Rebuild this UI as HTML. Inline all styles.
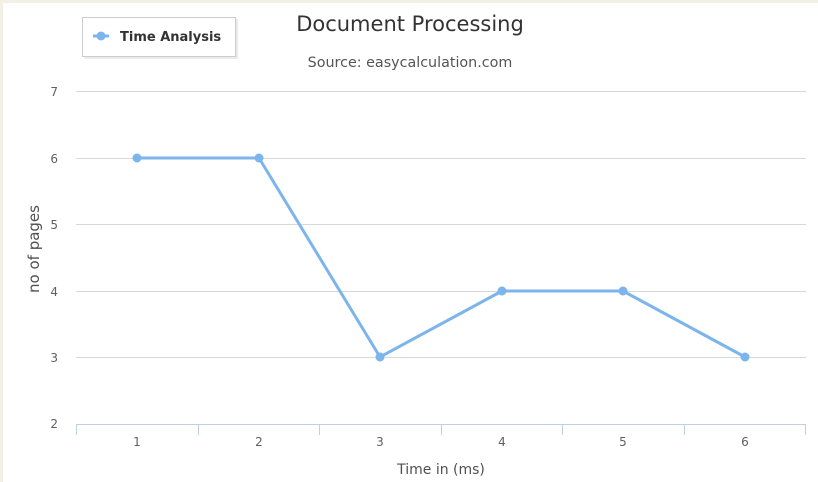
<!DOCTYPE html>
<html><head><style>
body{margin:0;width:818px;height:482px;overflow:hidden;background:#f2efe4;font-family:"DejaVu Sans","Liberation Sans",sans-serif}
#c{position:absolute;left:3px;top:3px;width:815px;height:479px;background:#fff}
</style></head><body>
<div id="c"></div>
<svg width="818" height="482" style="position:absolute;left:0;top:0" font-family="DejaVu Sans, Liberation Sans, sans-serif">
<g stroke="#d8d8d8" stroke-width="1">
<line x1="76" x2="806" y1="91.5" y2="91.5"/>
<line x1="76" x2="806" y1="158.5" y2="158.5"/>
<line x1="76" x2="806" y1="224.5" y2="224.5"/>
<line x1="76" x2="806" y1="291.5" y2="291.5"/>
<line x1="76" x2="806" y1="357.5" y2="357.5"/>
</g>
<g stroke="#c0d0e0" stroke-width="1">
<line x1="76" x2="806" y1="424.5" y2="424.5"/>
<line x1="76.5" x2="76.5" y1="424" y2="435"/>
<line x1="198.5" x2="198.5" y1="424" y2="435"/>
<line x1="319.5" x2="319.5" y1="424" y2="435"/>
<line x1="441.5" x2="441.5" y1="424" y2="435"/>
<line x1="562.5" x2="562.5" y1="424" y2="435"/>
<line x1="684.5" x2="684.5" y1="424" y2="435"/>
<line x1="805.5" x2="805.5" y1="424" y2="435"/>
</g>
<g fill="#606060" font-size="12" text-anchor="end">
<text x="58" y="96">7</text><text x="58" y="163">6</text><text x="58" y="229">5</text>
<text x="58" y="296">4</text><text x="58" y="362">3</text><text x="58" y="428">2</text>
</g>
<g fill="#606060" font-size="12" text-anchor="middle">
<text x="137" y="446">1</text><text x="259" y="446">2</text><text x="380" y="446">3</text>
<text x="502" y="446">4</text><text x="623" y="446">5</text><text x="745" y="446">6</text>
</g>
<text x="441" y="474" font-size="14" text-anchor="middle" style="fill:#505050">Time in (ms)</text>
<text transform="translate(39,249) rotate(-90)" font-size="15" fill="#505050" text-anchor="middle">no of pages</text>
<text x="410" y="31" font-size="21" fill="#333" text-anchor="middle">Document Processing</text>
<text x="410" y="67" font-size="14.3" fill="#555" text-anchor="middle">Source: easycalculation.com</text>
<polyline points="137,158 259,158 380,357 502,291 623,291 745,357" fill="none" stroke="#7cb5ec" stroke-width="3" stroke-linejoin="round"/>
<g fill="#7cb5ec">
<circle cx="137" cy="158" r="4.5"/><circle cx="259" cy="158" r="4.5"/><circle cx="380" cy="357" r="4.5"/>
<circle cx="502" cy="291" r="4.5"/><circle cx="623" cy="291" r="4.5"/><circle cx="745" cy="357" r="4.5"/>
</g>
<rect x="84" y="19" width="154" height="40" fill="#ddd" opacity="0.6"/>
<rect x="82.5" y="17.5" width="153" height="39" fill="#fff" stroke="#ccc"/>
<line x1="93" x2="109" y1="36" y2="36" stroke="#7cb5ec" stroke-width="3"/>
<circle cx="101" cy="36" r="4.5" fill="#7cb5ec"/>
<text x="120" y="41" font-size="13" font-weight="bold" fill="#333">Time Analysis</text>
</svg>
</body></html>
